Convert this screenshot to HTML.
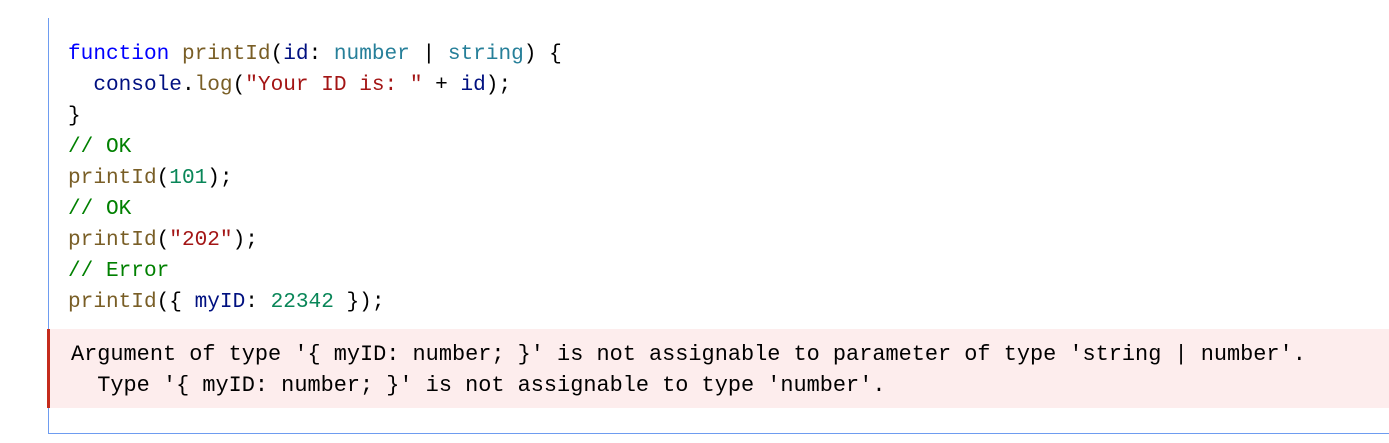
<!DOCTYPE html>
<html><head><style>
html,body{margin:0;padding:0;background:#fff;width:1389px;height:443px;overflow:hidden}
.box{position:absolute;left:48px;top:18px;width:1341px;height:415px;border-left:1px solid #6e9cf0;border-bottom:1px solid #6e9cf0}
pre{margin:0;font-family:"Liberation Mono",monospace;line-height:31px;white-space:pre}
.code{position:absolute;left:68px;top:39px;color:#000;font-size:21.1px}
.k{color:#0000ff}.f{color:#795e26}.v{color:#001080}.t{color:#267f99}.s{color:#a31515}.c{color:#008000}.n{color:#098658}
.err{position:absolute;left:47px;top:329px;width:1342px;height:79px;background:#fdeded;border-left:3px solid #c42b1c;box-sizing:border-box}
.err pre{position:absolute;left:21px;top:10px;color:#000;font-size:21.9px}
</style></head><body>
<div class="box"></div>
<pre class="code"><span class="k">function</span> <span class="f">printId</span>(<span class="v">id</span>: <span class="t">number</span> | <span class="t">string</span>) {
  <span class="v">console</span>.<span class="f">log</span>(<span class="s">"Your ID is: "</span> + <span class="v">id</span>);
}
<span class="c">// OK</span>
<span class="f">printId</span>(<span class="n">101</span>);
<span class="c">// OK</span>
<span class="f">printId</span>(<span class="s">"202"</span>);
<span class="c">// Error</span>
<span class="f">printId</span>({ <span class="v">myID</span>: <span class="n">22342</span> });</pre>
<div class="err"><pre>Argument of type '{ myID: number; }' is not assignable to parameter of type 'string | number'.
  Type '{ myID: number; }' is not assignable to type 'number'.</pre></div>
</body></html>
